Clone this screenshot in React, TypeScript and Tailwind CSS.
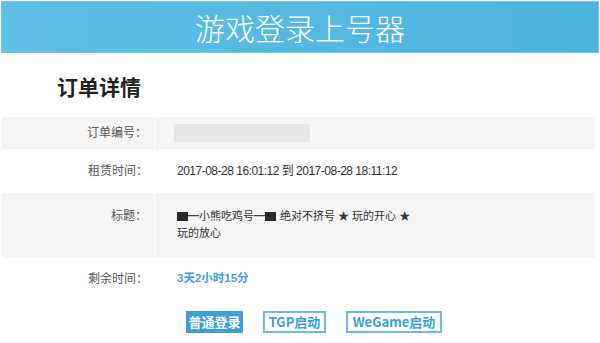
import React from "react";

const font = { fontFamily: '"Liberation Sans", "Noto Sans CJK SC", sans-serif' };

function Sq() {
  return <span className="inline-block w-[11px] h-[9px] bg-[#2a2a2a]" />;
}

export default function App() {
  return (
    <div
      className="w-[600px] h-[343px] bg-white overflow-hidden"
      style={font}
    >
      <div className="pt-px px-px">
        <div className="h-[52px] bg-gradient-to-r from-[#5ec0e8] to-[#4cb2e0] border border-[#74c9ec] flex items-center justify-center">
          <span
            className="text-white text-[30px] font-light leading-none"
            style={{ fontFamily: '"Noto Sans CJK SC", sans-serif' }}
          >
            游戏登录上号器
          </span>
        </div>
      </div>

      <div className="mt-[20px] pl-[57px] h-[28px] flex items-center">
        <span className="text-[21px] font-bold text-[#222]" style={{ fontFamily: '"Noto Sans CJK SC", sans-serif' }}>
          订单详情
        </span>
      </div>

      <div className="mt-[16px] mx-[2px] w-[593px] text-[12px]">
        <div className="flex h-[32px] bg-[#f5f5f5]">
          <div className="w-[153px] border-r border-white flex items-center justify-end pr-[7px] text-[#555]">
            订单编号：
          </div>
          <div className="flex-1 flex items-center pl-[19px]">
            <div className="w-[136px] h-[18px] bg-[#e6e6e6]" />
          </div>
        </div>

        <div className="flex h-[44px] bg-white">
          <div className="w-[153px] flex items-center justify-end pr-[7px] text-[#555]">
            租赁时间：
          </div>
          <div className="flex-1 flex items-center pl-[22px] text-[#333] tracking-[-0.5px]">
            2017-08-28 16:01:12 到 2017-08-28 18:11:12
          </div>
        </div>

        <div className="flex h-[65px] bg-[#f5f5f5]">
          <div className="w-[153px] border-r border-white flex items-start justify-end pr-[7px] pt-[15px] text-[#555] leading-[17px]">
            标题：
          </div>
          <div className="flex-1 pl-[22px] pt-[15px] text-[#333] text-[11px] leading-[17px]">
            <div className="flex items-center">
              <Sq />
              <span className="text-[#444]">━</span>
              <span>小熊吃鸡号</span>
              <span className="text-[#444]">━</span>
              <Sq />
              <span className="ml-[4px]">绝对不挤号 ★ 玩的开心 ★</span>
            </div>
            <div>玩的放心</div>
          </div>
        </div>

        <div className="flex h-[42px] bg-white">
          <div className="w-[153px] flex items-center justify-end pr-[7px] text-[#555]">
            剩余时间：
          </div>
          <div className="flex-1 flex items-center pl-[22px] text-[#3a9fdb] font-bold text-[11.5px]">
            3天2小时15分
          </div>
        </div>
      </div>

      <div className="mt-[11px] pl-[186px] flex gap-[20px] text-[13px] font-bold" style={{ fontFamily: '"Noto Sans CJK SC", sans-serif' }}>
        <div className="w-[57px] h-[22px] bg-[#3a9fdb] text-white flex items-center justify-center">
          普通登录
        </div>
        <div className="w-[63px] h-[22px] border-2 border-[#6cbce6] text-[#3a9fdb] flex items-center justify-center">
          TGP启动
        </div>
        <div className="w-[96px] h-[22px] border-2 border-[#6cbce6] text-[#3a9fdb] flex items-center justify-center">
          WeGame启动
        </div>
      </div>
    </div>
  );
}
